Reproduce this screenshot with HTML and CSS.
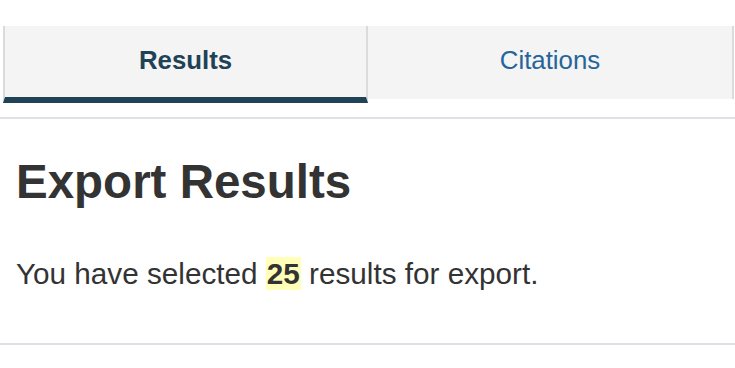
FILE: index.html
```html
<!DOCTYPE html>
<html lang="en">
<head>
<meta charset="utf-8">
<title>Export Results</title>
<link rel="stylesheet" href="styles.css">
</head>
<body>
<div class="tabs">
  <div class="tab tab-active">Results</div>
  <div class="tab tab-inactive">Citations</div>
</div>
<hr class="rule rule-top">
<div class="content">
  <h1 class="title">Export Results</h1>
  <p class="summary">You have selected <span class="count">25</span> results for export.</p>
</div>
<hr class="rule rule-bottom">
</body>
</html>
```
FILE: styles.css
```css
html, body {
  margin: 0;
  padding: 0;
  background: #ffffff;
}
body {
  font-family: "Liberation Sans", Arial, sans-serif;
  color: #333333;
  width: 735px;
  height: 368px;
  overflow: hidden;
}
.tabs {
  display: flex;
  align-items: flex-start;
  padding-top: 26px;
  padding-left: 3px;
}
.tab {
  display: flex;
  align-items: center;
  justify-content: center;
  background: #f4f4f4;
  font-size: 25.8px;
  line-height: 1.1;
  box-sizing: border-box;
}
.tab-active {
  width: 365px;
  height: 77px;
  padding-bottom: 3px;
  border-left: 2px solid #d9dcdf;
  border-right: 2px solid #d9dcdf;
  border-bottom: 6px solid #1f4257;
  color: #1f4257;
  font-weight: bold;
}
.tab-inactive {
  width: 366px;
  height: 73px;
  padding-bottom: 5px;
  border-right: 2px solid #d9dcdf;
  color: #26659a;
}
.rule {
  border: 0;
  height: 2px;
  background: #dde1e5;
  margin: 0;
}
.rule-top {
  margin-top: 14px;
}
.content {
  padding: 0 16px;
}
.title {
  font-size: 47.5px;
  line-height: 1.1;
  font-weight: bold;
  margin: 37px 0 0;
  color: #333333;
}
.summary {
  font-size: 29.7px;
  line-height: 41px;
  margin: 45px 0 0;
}
.count {
  font-weight: bold;
  background: #ffffb8;
  padding: 0 1px;
}
.rule-bottom {
  margin-top: 49px;
}
```
